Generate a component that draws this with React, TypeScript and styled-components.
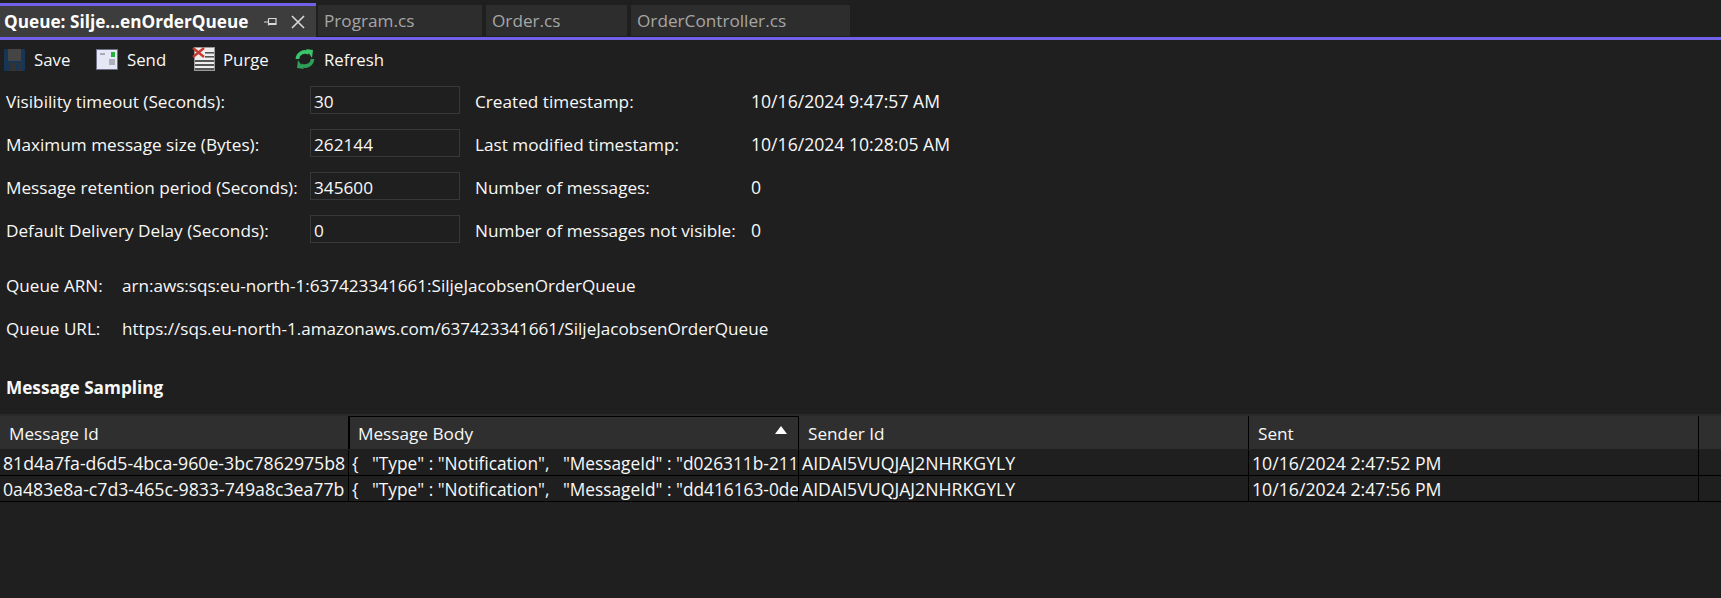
import React from 'react';
import styled, { createGlobalStyle } from 'styled-components';

const GlobalStyle = createGlobalStyle`
  html, body {
    margin: 0;
    padding: 0;
    height: 100%;
    overflow: hidden;
    background: #1f1f1f;
  }
  body {
    font-family: 'Open Sans', 'Noto Sans', sans-serif;
    font-size: 17.2px;
    color: #f8f8f8;
  }
`;

const Page = styled.div`
  width: 1721px;
  height: 598px;
  display: flex;
  flex-direction: column;
  background: #1f1f1f;
`;

const TabStrip = styled.div`
  height: 40px;
  padding-top: 3px;
  box-sizing: border-box;
  display: flex;
  gap: 4px;
  border-bottom: 3px solid #7160e8;
`;

const ActiveTab = styled.div`
  width: 316px;
  box-sizing: border-box;
  height: 34px;
  border-top: 3px solid #7160e8;
  background: #3d3d3d;
  display: flex;
  align-items: center;
  padding: 0 11px 0 4px;
  color: #ffffff;
  font-weight: 700;
  white-space: nowrap;
  margin-right: -2px;
`;

const ActiveTitle = styled.span`
  flex: 1;
`;

const TabIcons = styled.span`
  display: flex;
  align-items: center;
  gap: 14px;
`;

const Tab = styled.div<{ $width: number }>`
  width: ${({ $width }) => $width}px;
  box-sizing: border-box;
  height: 31px;
  margin-top: 2px;
  background: #2d2d2d;
  color: #a6a6a6;
  padding-left: 6px;
  display: flex;
  align-items: center;
`;

const Toolbar = styled.div`
  height: 40px;
  display: flex;
  align-items: center;
  padding: 0 0 2px 4px;
  box-sizing: border-box;
  font-size: 16.8px;
`;

const ToolButton = styled.div<{ $width: number; $gap: number }>`
  width: ${({ $width }) => $width}px;
  display: flex;
  align-items: center;
  gap: ${({ $gap }) => $gap}px;
`;

const FormGrid = styled.div`
  display: grid;
  grid-template-columns: 304px 150px 291px auto;
  grid-auto-rows: 28px;
  row-gap: 15px;
  padding: 6px 0 0 6px;
  align-items: center;
  justify-content: start;
`;

const FieldText = styled.div`
  padding-top: 2px;
`;

const FieldValue = styled(FieldText)`
  font-size: 17.6px;
`;

const FieldInput = styled.div`
  height: 28px;
  box-sizing: border-box;
  border: 1px solid #383838;
  padding: 2px 0 0 3px;
  display: flex;
  align-items: center;
`;

const SideLabel = styled(FieldText)`
  padding-left: 15px;
`;

const UrlRows = styled.div`
  display: grid;
  grid-template-columns: 116px auto;
  grid-auto-rows: 28px;
  row-gap: 15px;
  padding: 28px 0 0 6px;
  align-items: center;
  justify-content: start;
  font-size: 17.1px;
`;

const SectionTitle = styled.div`
  font-weight: 700;
  padding: 35px 0 0 6px;
  height: 22px;
  line-height: 22px;
`;

const Table = styled.div`
  margin-top: 15px;
  border-top: 2px solid #2a2a2a;
`;

const TableRow = styled.div<{ $head?: boolean }>`
  display: grid;
  grid-template-columns: 349px 450px 450px 450px 22px;
  height: ${({ $head }) => ($head ? 33 : 25)}px;
  background: ${({ $head }) => ($head ? '#2f2f2f' : '#1f1f1f')};
  border-bottom: 1px solid ${({ $head }) => ($head ? '#1f1f1f' : '#000000')};
`;

const HeadCell = styled.div<{ $sorted?: boolean }>`
  position: relative;
  display: flex;
  align-items: center;
  padding: 2px 0 0 9px;
  box-sizing: border-box;
  border-right: 1px solid #000000;
  ${({ $sorted }) => $sorted && 'box-shadow: inset 1px 1px 0 #000000;'}
`;

const SortArrow = styled.span`
  position: absolute;
  right: 11px;
  top: 10px;
  width: 0;
  height: 0;
  border-left: 6px solid transparent;
  border-right: 6px solid transparent;
  border-bottom: 8px solid #ffffff;
`;

const Cell = styled.div<{ $body?: boolean }>`
  padding-left: 3px;
  box-sizing: border-box;
  border-right: 1px solid #000000;
  overflow: hidden;
  white-space: pre;
  line-height: 27px;
  font-size: ${({ $body }) => ($body ? 17.3 : 17.7)}px;
`;

const SaveIcon = () => (
  <svg width="21" height="23" viewBox="0 0 21 23">
    <rect x="0" y="1" width="21" height="22" rx="1" fill="#173554" />
    <rect x="4" y="1" width="13" height="12" fill="#454545" />
    <rect x="6" y="15" width="11" height="8" fill="#333333" />
    <rect x="12" y="16" width="3" height="6" fill="#173554" />
  </svg>
);

const SendIcon = () => (
  <svg width="22" height="21" viewBox="0 0 22 21">
    <rect x="0.5" y="0.5" width="21" height="20" fill="#e6e7f5" stroke="#70708a" />
    <rect x="15" y="3" width="4" height="5" fill="#22b33a" />
    <rect x="4" y="4" width="5" height="2" fill="#a8a8b8" />
    <rect x="13" y="10" width="6" height="6" fill="#b0b0bc" />
  </svg>
);

const PurgeIcon = () => (
  <svg width="24" height="26" viewBox="0 0 24 26">
    <rect x="2.5" y="1.5" width="20" height="23" fill="#eeeeee" stroke="#9a9a9a" />
    <rect x="13" y="6" width="9" height="1.6" fill="#555555" />
    <rect x="13" y="10" width="9" height="1.6" fill="#555555" />
    <rect x="3" y="14" width="19" height="2" fill="#555555" />
    <rect x="3" y="18" width="19" height="2" fill="#555555" />
    <rect x="3" y="22" width="19" height="2" fill="#555555" />
    <path d="M1 2l11 9M12 2L1 11" stroke="#c8382e" strokeWidth="2.4" />
  </svg>
);

const RefreshIcon = () => (
  <svg width="20" height="20" viewBox="0 0 20 20" fill="none">
    <path d="M2.5 10a7.5 7 0 0 1 11.5-6" stroke="#3cc46c" strokeWidth="3.6" />
    <path d="M11 0l7 1-1 8z" fill="#3cc46c" />
    <path d="M17.5 10a7.5 7 0 0 1-11.5 6" stroke="#2f9e58" strokeWidth="3.6" />
    <path d="M9 20l-7-1 1-8z" fill="#2f9e58" />
  </svg>
);

const PinIcon = () => (
  <svg width="13" height="13" viewBox="0 0 13 13" fill="none">
    <path d="M0 7h4M4.5 3.5v7M4.5 3.5h7.5v6H4.5" stroke="#d8d8d8" strokeWidth="1.2" />
    <rect x="5" y="8" width="7" height="1.6" fill="#d8d8d8" />
  </svg>
);

const CloseIcon = () => (
  <svg width="14" height="14" viewBox="0 0 14 14" fill="none">
    <path d="M1 1l12 12M13 1L1 13" stroke="#d8d8d8" strokeWidth="1.6" />
  </svg>
);

const tabs = [
  { name: 'Program.cs', width: 164 },
  { name: 'Order.cs', width: 141 },
  { name: 'OrderController.cs', width: 219 },
];

const tools = [
  { name: 'Save', icon: <SaveIcon />, width: 92, gap: 9 },
  { name: 'Send', icon: <SendIcon />, width: 96, gap: 9 },
  { name: 'Purge', icon: <PurgeIcon />, width: 103, gap: 7 },
  { name: 'Refresh', icon: <RefreshIcon />, width: 100, gap: 9 },
];

const fields = [
  ['Visibility timeout (Seconds):', '30', 'Created timestamp:', '10/16/2024 9:47:57 AM'],
  ['Maximum message size (Bytes):', '262144', 'Last modified timestamp:', '10/16/2024 10:28:05 AM'],
  ['Message retention period (Seconds):', '345600', 'Number of messages:', '0'],
  ['Default Delivery Delay (Seconds):', '0', 'Number of messages not visible:', '0'],
];

const messages = [
  {
    id: '81d4a7fa-d6d5-4bca-960e-3bc7862975b8',
    body: '{   "Type" : "Notification",   "MessageId" : "d026311b-211',
    sent: '10/16/2024 2:47:52 PM',
  },
  {
    id: '0a483e8a-c7d3-465c-9833-749a8c3ea77b',
    body: '{   "Type" : "Notification",   "MessageId" : "dd416163-0de',
    sent: '10/16/2024 2:47:56 PM',
  },
];

export default function App() {
  return (
    <Page>
      <GlobalStyle />
      <TabStrip>
        <ActiveTab>
          <ActiveTitle>Queue: Silje...enOrderQueue</ActiveTitle>
          <TabIcons>
            <PinIcon />
            <CloseIcon />
          </TabIcons>
        </ActiveTab>
        {tabs.map((tab) => (
          <Tab key={tab.name} $width={tab.width}>
            {tab.name}
          </Tab>
        ))}
      </TabStrip>
      <Toolbar>
        {tools.map((tool) => (
          <ToolButton key={tool.name} $width={tool.width} $gap={tool.gap}>
            {tool.icon}
            {tool.name}
          </ToolButton>
        ))}
      </Toolbar>
      <FormGrid>
        {fields.map(([label, value, sideLabel, sideValue]) => (
          <React.Fragment key={label}>
            <FieldText>{label}</FieldText>
            <FieldInput>{value}</FieldInput>
            <SideLabel>{sideLabel}</SideLabel>
            <FieldValue>{sideValue}</FieldValue>
          </React.Fragment>
        ))}
      </FormGrid>
      <UrlRows>
        <div>Queue ARN:</div>
        <div>arn:aws:sqs:eu-north-1:637423341661:SiljeJacobsenOrderQueue</div>
        <div>Queue URL:</div>
        <div>https://sqs.eu-north-1.amazonaws.com/637423341661/SiljeJacobsenOrderQueue</div>
      </UrlRows>
      <SectionTitle>Message Sampling</SectionTitle>
      <Table>
        <TableRow $head>
          <HeadCell>Message Id</HeadCell>
          <HeadCell $sorted>
            Message Body
            <SortArrow />
          </HeadCell>
          <HeadCell>Sender Id</HeadCell>
          <HeadCell>Sent</HeadCell>
          <div />
        </TableRow>
        {messages.map((message) => (
          <TableRow key={message.id}>
            <Cell>{message.id}</Cell>
            <Cell $body>{message.body}</Cell>
            <Cell>AIDAI5VUQJAJ2NHRKGYLY</Cell>
            <Cell>{message.sent}</Cell>
            <div />
          </TableRow>
        ))}
      </Table>
    </Page>
  );
}
